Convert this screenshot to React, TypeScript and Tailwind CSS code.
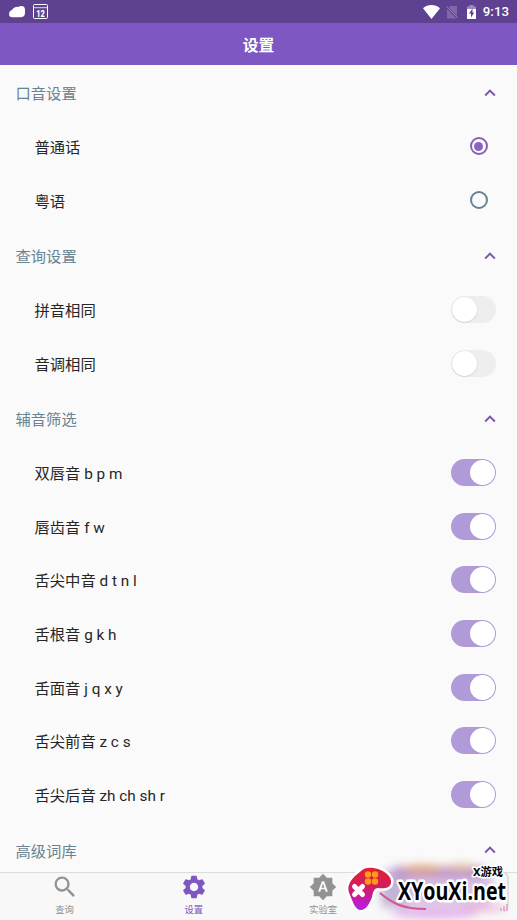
import { useState } from 'react';
import { MdKeyboardArrowUp, MdSearch, MdSettings, MdBrightnessAuto } from 'react-icons/md';

const accents = ['普通话', '粤语'];
const queryOptions = ['拼音相同', '音调相同'];
const consonants = ['双唇音 b p m', '唇齿音 f w', '舌尖中音 d t n l', '舌根音 g k h', '舌面音 j q x y', '舌尖前音 z c s', '舌尖后音 zh ch sh r'];

function StatusBar() {
  return (
    <div className="flex h-[23px] shrink-0 items-center justify-between bg-[#5e4190] pt-px pr-2 pl-[9px] text-white">
      <div className="flex items-center gap-2">
        <svg width="16" height="12" viewBox="0 0 16 12" fill="currentColor">
          <path d="M3.500 11.200C1.200 11.200 0 10 0 8.200c0-2.200 1.200-3.700 3.200-4.500C5 1.500 7 .6 9 .9 10.300.2 11.500 0 12.500 0 14.800 0 16 1.500 16 3.800v2.800c0 3-1.200 4.600-4 4.600z" />
        </svg>
        <svg className="mb-px" width="15" height="15" viewBox="0 0 15 15" fill="none" stroke="currentColor">
          <rect x=".5" y=".5" width="14" height="14" rx="1" />
          <path d="M.5 3.700h14" strokeWidth=".8" />
          <text x="3.200" y="12.500" textLength="8.600" lengthAdjust="spacingAndGlyphs" fill="currentColor" stroke="none" className="font-['Roboto',sans-serif] text-[9.500px] font-black">12</text>
        </svg>
      </div>
      <div className="flex items-center">
        <svg width="17" height="14" viewBox="0 0 17 14" fill="currentColor">
          <path d="M8.500 14 0 3.200C2.500 1 5.300 0 8.500 0S14.500 1 17 3.200z" />
        </svg>
        <svg className="ml-[6px]" width="13" height="14" viewBox="0 0 13 14">
          <path d="M4.500 1H11v12.500H1V4.500z" fill="#8068a8" />
          <path d="M.5 1.500 12.500 14" stroke="#5e4190" strokeWidth="2.200" />
          <path d="M.5 1.200 12 13" stroke="#9580b8" strokeWidth="1" />
        </svg>
        <svg className="ml-[8px]" width="9" height="14" viewBox="0 0 9 14">
          <path d="M2.500 0h4v1.500H9V5H0V1.500h2.500z" fill="#9d89bd" />
          <path d="M0 4h9v10H0z" fill="#fff" />
          <path d="M5.500 3.500 2 8.500h2v4l3.200-5H5.500z" fill="#5e4190" />
        </svg>
        <span className="ml-[7px] font-['Roboto',sans-serif] text-[13.300px] leading-none font-medium">9:13</span>
      </div>
    </div>
  );
}

function Section({ title, children }: { title: string; children?: React.ReactNode }) {
  return (
    <section className="pt-[2px]">
      <h2 className="flex h-[53.660px] items-center justify-between pr-4 pl-[15.500px] text-[#688391]">
        <span className="pt-[2px]">{title}</span>
        <MdKeyboardArrowUp className="mb-0.5 size-[22px] text-[#7955aa]" />
      </h2>
      {children}
    </section>
  );
}

function Switch({ on, onClick }: { on: boolean; onClick: () => void }) {
  return (
    <button
      role="switch"
      aria-checked={on}
      onClick={onClick}
      className={`mb-0.5 flex h-[27px] w-[44.500px] items-center rounded-full px-px ${on ? 'justify-end bg-[#b09ad8]' : 'justify-start bg-[#eeeeee]'}`}
    >
      <span className={`size-[25px] rounded-full bg-white ${on ? '' : 'shadow-[0_0.5px_1.5px_rgba(0,0,0,0.2)]'}`} />
    </button>
  );
}

function SwitchRow({ label, defaultOn = false }: { label: string; defaultOn?: boolean }) {
  const [on, setOn] = useState(defaultOn);
  return (
    <div className="flex h-[53.660px] items-center justify-between pr-[21.500px] pl-[34.500px]">
      <span className="pt-[2px]">{label}</span>
      <Switch on={on} onClick={() => setOn(!on)} />
    </div>
  );
}

function Tab({ label, icon, active = false }: { label: string; icon: React.ReactNode; active?: boolean }) {
  return (
    <div className={`flex flex-1 flex-col items-center ${active ? 'text-[#7e57c2]' : 'text-[#929292]'}`}>
      <div className="flex h-[28px] items-center">{icon}</div>
      <span className="pt-px text-[9.300px] leading-[16px]">{label}</span>
    </div>
  );
}

function Watermark() {
  return (
    <svg className="absolute top-[850px] left-[337px]" width="180" height="70" viewBox="0 0 180 70">
      <defs>
        <linearGradient id="pad" x1="0" y1="0" x2="0" y2="1">
          <stop offset="0" stopColor="#e5202c" />
          <stop offset=".5" stopColor="#d01c68" />
          <stop offset="1" stopColor="#b51cf2" />
        </linearGradient>
        <filter id="haze" x="-30%" y="-50%" width="160%" height="200%">
          <feGaussianBlur stdDeviation="4" />
        </filter>
      </defs>
      <g filter="url(#haze)">
        <rect x="44" y="18" width="112" height="38" rx="12" fill="#d3b4e0" opacity=".8" />
        <rect x="44" y="24" width="28" height="34" fill="#b6aacb" opacity=".6" />
        <rect x="56" y="16" width="92" height="13" rx="5" fill="#b78cc6" opacity=".75" />
        <ellipse cx="86" cy="19" rx="20" ry="5" fill="#e6ac78" opacity=".75" />
        <ellipse cx="124" cy="17" rx="14" ry="4" fill="#e8c08a" opacity=".7" />
        <ellipse cx="98" cy="63" rx="44" ry="6" fill="#dfabea" opacity=".85" />
        <ellipse cx="146" cy="58" rx="24" ry="4" fill="#e9a8d1" opacity=".7" />
      </g>
      <path d="M159 22c9-1 12 2 12 8v23c0 4-1 7-4 9" fill="none" stroke="#d9d5dc" strokeWidth="1.500" />
      <path d="M164 61v-3m3 3v-5m3 5v-7" stroke="#dfa0bf" strokeWidth="1.500" />
      <path d="M43 43c12 10 22 16 46 16" fill="none" stroke="#d4568c" strokeWidth="2" />
      <path
        d="M24 21C28 17 34 17 41 19c7 2 14 8 13 14-1 5-7 6-13 5-4 0-5 4-6 9-2 6-6 13-11 13-6 0-8-8-11-15C9 37 13 31 18 26z"
        fill="url(#pad)"
        stroke="#fff"
        strokeWidth="5"
        strokeLinejoin="round"
        paintOrder="stroke"
      />
      <g fill="#ff991c">
        <circle cx="31" cy="24.500" r="3.200" />
        <circle cx="38" cy="24.500" r="3.200" />
        <circle cx="31" cy="31.500" r="3.200" />
        <circle cx="38" cy="31.500" r="3.200" />
      </g>
      <path d="m17.500 36.500 8 8m0-8-8 8" stroke="#fff" strokeWidth="5" strokeLinecap="round" />
      <text
        x="61"
        y="50"
        textLength="108"
        lengthAdjust="spacingAndGlyphs"
        stroke="#fff"
        strokeWidth="5"
        strokeLinejoin="round"
        paintOrder="stroke"
        className="font-['Open_Sans','Noto_Sans',sans-serif] text-[24.500px] font-bold"
      >
        XYouXi.net
      </text>
      <text
        x="136"
        y="26"
        textLength="30"
        lengthAdjust="spacingAndGlyphs"
        stroke="#fff"
        strokeWidth="3"
        strokeLinejoin="round"
        paintOrder="stroke"
        className="font-['Noto_Sans','Noto_Sans_CJK_SC',sans-serif] text-[11px] font-bold"
      >
        X游戏
      </text>
    </svg>
  );
}

export default function App() {
  const [accent, setAccent] = useState('普通话');

  return (
    <div className="relative flex h-[920px] w-[517px] flex-col overflow-hidden bg-[#fafafa] font-['Roboto','Noto_Sans_CJK_SC',sans-serif] text-[15.300px] text-[#262626]">
      <StatusBar />
      <header className="flex h-[42px] shrink-0 items-center justify-center bg-[#7e57c2] pt-[3px] text-[15.800px] font-bold text-white">设置</header>

      <main className="min-h-0 flex-1 overflow-hidden">
        <Section title="口音设置">
          {accents.map((name) => (
            <div key={name} className="flex h-[53.660px] items-center justify-between pr-[29.500px] pl-[34.500px]">
              <span className="pt-[2px]">{name}</span>
              <button
                role="radio"
                aria-checked={accent === name}
                onClick={() => setAccent(name)}
                className={`mb-[2px] flex size-[18px] items-center justify-center rounded-full border-2 ${accent === name ? 'border-[#8562b4]' : 'border-[#688391]'}`}
              >
                {accent === name && <span className="size-[9px] shrink-0 rounded-full bg-[#8a63bf]" />}
              </button>
            </div>
          ))}
        </Section>
        <Section title="查询设置">
          {queryOptions.map((label) => <SwitchRow key={label} label={label} />)}
        </Section>
        <Section title="辅音筛选">
          {consonants.map((label) => <SwitchRow key={label} label={label} defaultOn />)}
        </Section>
        <Section title="高级词库" />
      </main>

      <nav className="flex h-12 shrink-0 border-t border-[#dcdcdc] bg-[#f8f8f8]">
        <Tab label="查询" icon={<MdSearch className="size-[28px]" />} />
        <Tab label="设置" icon={<MdSettings className="size-[28px]" />} active />
        <Tab label="实验室" icon={<MdBrightnessAuto className="size-[28px]" />} />
        <div className="flex-1" />
      </nav>
      <Watermark />
    </div>
  );
}
